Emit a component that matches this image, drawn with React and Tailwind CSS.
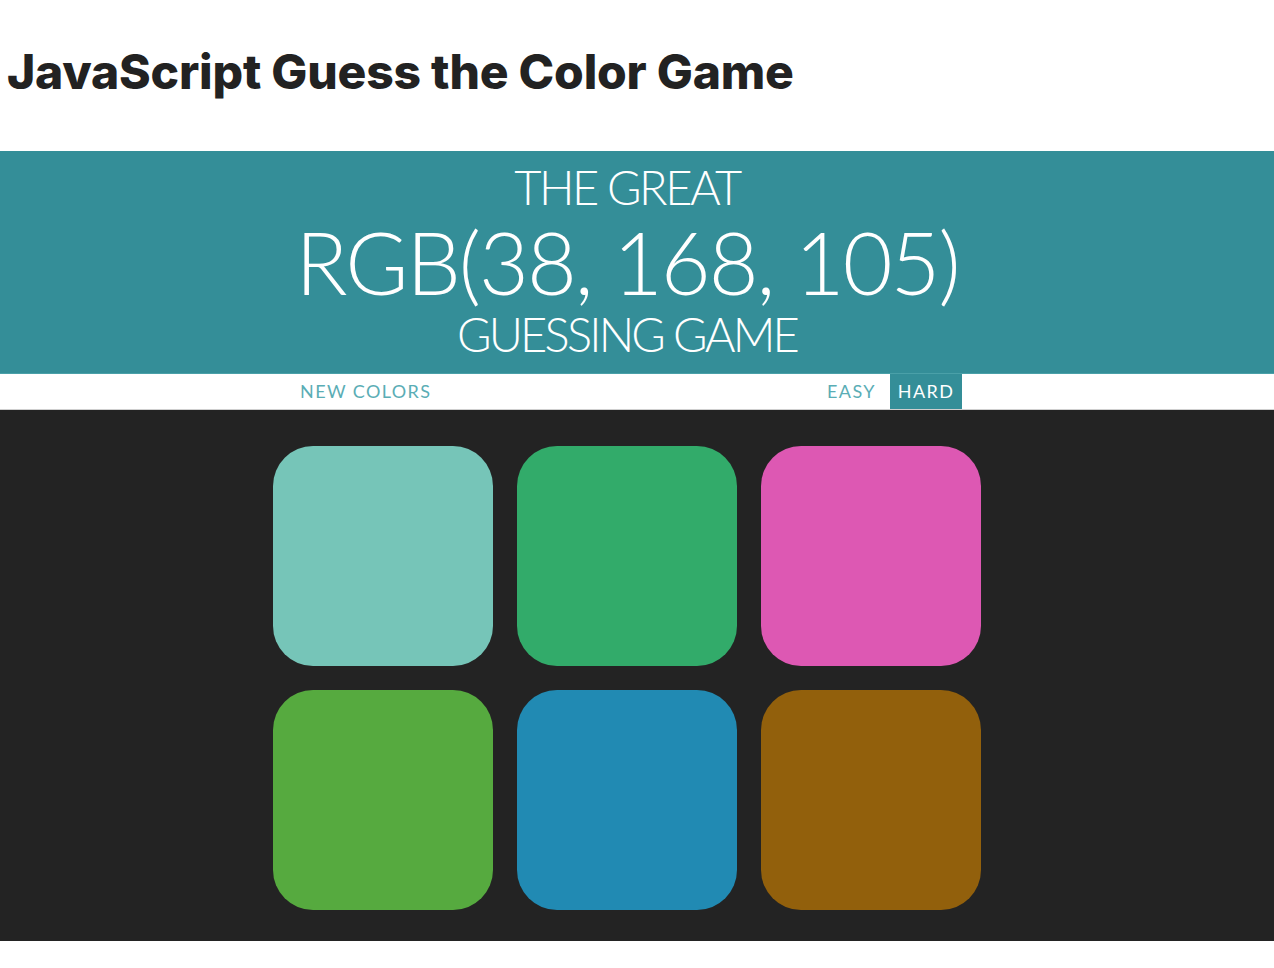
import React from "react";

const colores = ["#76c5b8", "#32ab6a", "#dd58b3", "#56aa3f", "#218ab3", "#92600c"];

export default function App() {
    return (
        <div className="bg-white min-h-[968px]">
            {/* título de la página */}
            <h1 className="pt-[42px] pl-[7px] h-[151px] text-[48px] leading-[60px] font-extrabold text-[#222] tracking-[-0.2px] font-['Inter',sans-serif]">
                JavaScript Guess the Color Game
            </h1>

            {/* encabezado del juego */}
            <div className="bg-[#348e98] h-[222px] pr-[20px] flex flex-col items-center text-white font-['Lato',sans-serif] font-light uppercase">
                <div className="text-[47px] leading-[48px] pt-[12px] tracking-[-2.5px]">The Great</div>
                <div className="text-[86px] leading-[86px] mt-[8px] tracking-[-2px]">RGB(38, 168, 105)</div>
                <div className="text-[47px] leading-[44px] mt-[7px] tracking-[-2.8px]">Guessing Game</div>
            </div>

            {/* barra de controles */}
            <div className="bg-white h-[37px] border-t border-[#4aa0a8] border-b border-b-[#cfcfcf] pr-[20px]">
                <div className="w-[680px] mx-auto flex items-stretch h-full font-['Lato',sans-serif] text-[18px] text-[#5aadb5] tracking-[1.4px]">
                    <button className="px-[8px] ml-[5px] uppercase">New Colors</button>
                    <div className="flex-1" />
                    <button className="px-[8px] mr-[6px] uppercase">Easy</button>
                    <button className="px-[6px] bg-[#348e98] text-white w-[72px] mr-[5px] uppercase">Hard</button>
                </div>
            </div>

            {/* cuadros de colores */}
            <div className="bg-[#232323] h-[531px] pt-[36px] pr-[20px]">
                <div className="w-[708px] mx-auto grid grid-cols-3 gap-[24px]">
                    {colores.map((c) => (
                        <div key={c} className="w-[220px] h-[220px] rounded-[40px]" style={{ backgroundColor: c }} />
                    ))}
                </div>
            </div>
        </div>
    );
}
